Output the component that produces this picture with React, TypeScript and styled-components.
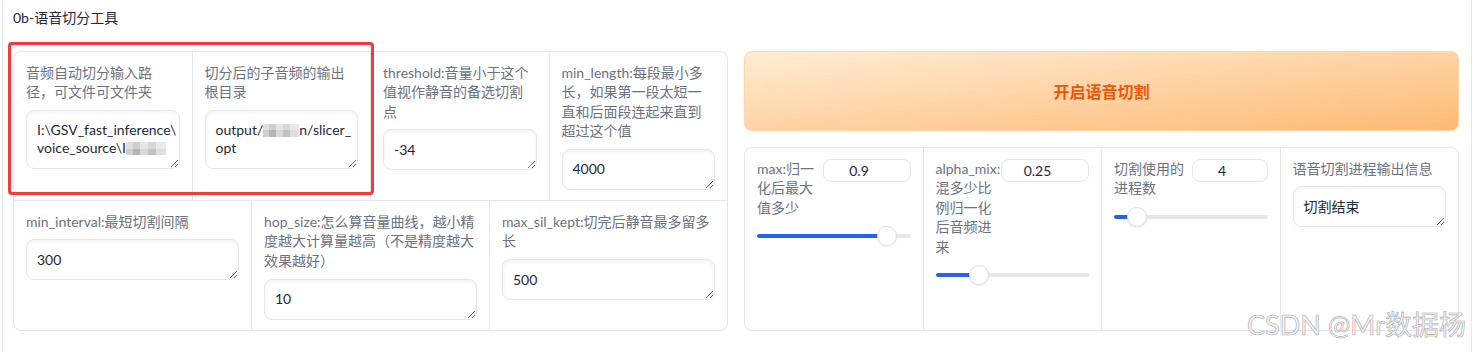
import styled, { createGlobalStyle } from "styled-components";

const GlobalStyle = createGlobalStyle`
  html, body {
    margin: 0;
    padding: 0;
    background: #ffffff;
  }
  body {
    font-family: Lato, "Noto Sans CJK SC", sans-serif;
    color: #1f2937;
    overflow: hidden;
  }
  * {
    box-sizing: border-box;
  }
`;

const Frame = styled.div`
  position: relative;
  margin-left: 2px;
  width: 1470px;
  height: 352px;
  border-left: 1px solid #e5e7eb;
  border-right: 1px solid #e5e7eb;
  padding: 8px 12px 0 10px;
`;

const Title = styled.div`
  font-size: 14px;
  line-height: 20px;
  color: #1f2937;
  margin-bottom: 23px;
`;

const Layout = styled.div`
  display: grid;
  grid-template-columns: 1fr 1fr;
  gap: 16px;
`;

const Form = styled.div`
  display: flex;
  flex-direction: column;
  gap: 1px;
  background: #e5e7eb;
  border: 1px solid #e5e7eb;
  border-radius: 8px;
  overflow: hidden;
`;

const FormRow = styled.div<{ $cols: number }>`
  display: grid;
  grid-template-columns: repeat(${(p) => p.$cols}, 1fr);
  gap: 1px;
  flex: 1;
`;

const Cell = styled.div`
  background: #ffffff;
  padding: 10.5px 12px;
  min-width: 0;
`;

const Label = styled.span`
  display: block;
  font-size: 14px;
  line-height: 19.6px;
  color: #6b7280;
  margin-bottom: 8px;
`;

const TextBox = styled.div`
  background: #ffffff;
  border: 1px solid #e5e7eb;
  border-radius: 8px;
  padding: 10.5px 7px 10.5px 10px;
  font-size: 14px;
  line-height: 18px;
  color: #1f2937;
  box-shadow: inset 0 2px 4px rgba(0, 0, 0, 0.05);
  white-space: nowrap;
  overflow: hidden;
  resize: vertical;
`;

const Line = styled.span`
  display: block;
`;

const Mosaic = styled.span<{ $w: number }>`
  display: inline-block;
  width: ${(p) => p.$w}px;
  height: 13px;
  vertical-align: -2px;
  background:
    linear-gradient(180deg, rgba(255, 255, 255, 0.35) 0 50%, rgba(0, 0, 0, 0) 50%),
    linear-gradient(90deg, #cfcfcf 0 18%, #b8b4b4 18% 36%, #d9d9d9 36% 55%, #c2c2c2 55% 75%, #dedede 75%);
`;

const RightColumn = styled.div`
  display: flex;
  flex-direction: column;
  gap: 16px;
`;

const StartButton = styled.button`
  height: 80px;
  border: 1px solid #fed7aa;
  border-radius: 8px;
  background: linear-gradient(to bottom right, #ffedd5, #fdba74);
  box-shadow: 0 1px 2px rgba(0, 0, 0, 0.05);
  color: #ea580c;
  font-family: Lato, "Noto Sans CJK SC", sans-serif;
  font-size: 16px;
  font-weight: 700;
  cursor: pointer;
`;

const SliderForm = styled(Form)`
  flex: 1;
`;

const SliderHead = styled.div`
  display: flex;
  align-items: flex-start;
`;

const HeadLabel = styled.span`
  flex: 1;
  min-width: 0;
  font-size: 14px;
  line-height: 19.6px;
  color: #6b7280;
`;

const NumBox = styled.div<{ $w: number }>`
  flex: none;
  width: ${(p) => p.$w}px;
  height: 23.5px;
  border: 1px solid #e5e7eb;
  border-radius: 8px;
  padding-right: 15px;
  text-align: center;
  font-size: 14px;
  line-height: 21.5px;
  color: #1f2937;
`;

const Range = styled.input.attrs({ type: "range" })<{ $f: number }>`
  -webkit-appearance: none;
  appearance: none;
  display: block;
  width: 100%;
  height: 20px;
  margin: 9px 0 0;
  padding: 0;
  background: transparent;

  &::-webkit-slider-runnable-track {
    height: 4px;
    border-radius: 2px;
    background: linear-gradient(
      to right,
      #2563eb 0,
      #2563eb calc(10px + ${(p) => p.$f} * (100% - 20px)),
      #e5e7eb calc(10px + ${(p) => p.$f} * (100% - 20px)),
      #e5e7eb 100%
    );
  }

  &::-webkit-slider-thumb {
    -webkit-appearance: none;
    width: 20px;
    height: 20px;
    margin-top: -8px;
    border-radius: 50%;
    background: #ffffff;
    border: 1px solid #dcdfe4;
    box-shadow: 0 1px 2px rgba(0, 0, 0, 0.08);
  }
`;

const Annotation = styled.div`
  position: absolute;
  left: 5px;
  top: 42px;
  width: 366px;
  height: 153px;
  border: 3px solid #f23b3b;
  border-radius: 4px;
  pointer-events: none;
`;

const Watermark = styled.div`
  position: absolute;
  left: 1244px;
  top: 310px;
  font-family: Lato, "Noto Sans CJK SC", sans-serif;
  font-size: 27px;
  line-height: 30px;
  white-space: nowrap;
  color: rgba(244, 244, 244, 0.9);
  -webkit-text-stroke: 0.6px #ababab;
  pointer-events: none;
`;

type SliderProps = {
  label: string;
  value: number;
  min: number;
  max: number;
  step: number;
  inputWidth: number;
};

function SliderCell({ label, value, min, max, step, inputWidth }: SliderProps) {
  const f = (value - min) / (max - min);
  return (
    <Cell>
      <SliderHead>
        <HeadLabel>{label}</HeadLabel>
        <NumBox $w={inputWidth}>{value}</NumBox>
      </SliderHead>
      <Range $f={f} min={min} max={max} step={step} defaultValue={value} />
    </Cell>
  );
}

export default function App() {
  return (
    <>
      <GlobalStyle />
      <Frame>
        <Title>0b-语音切分工具</Title>
        <Layout>
          <Form>
            <FormRow $cols={4}>
              <Cell>
                <Label>音频自动切分输入路径，可文件可文件夹</Label>
                <TextBox>
                  <Line>I:\GSV_fast_inference\</Line>
                  <Line>
                    voice_source\I<Mosaic $w={40} />
                  </Line>
                </TextBox>
              </Cell>
              <Cell>
                <Label>切分后的子音频的输出根目录</Label>
                <TextBox>
                  <Line>
                    output/<Mosaic $w={36} />
                    n/slicer_
                  </Line>
                  <Line>opt</Line>
                </TextBox>
              </Cell>
              <Cell>
                <Label>threshold:音量小于这个值视作静音的备选切割点</Label>
                <TextBox>-34</TextBox>
              </Cell>
              <Cell>
                <Label>min_length:每段最小多长，如果第一段太短一直和后面段连起来直到超过这个值</Label>
                <TextBox>4000</TextBox>
              </Cell>
            </FormRow>
            <FormRow $cols={3}>
              <Cell>
                <Label>min_interval:最短切割间隔</Label>
                <TextBox>300</TextBox>
              </Cell>
              <Cell>
                <Label>hop_size:怎么算音量曲线，越小精度越大计算量越高（不是精度越大效果越好）</Label>
                <TextBox>10</TextBox>
              </Cell>
              <Cell>
                <Label>max_sil_kept:切完后静音最多留多长</Label>
                <TextBox>500</TextBox>
              </Cell>
            </FormRow>
          </Form>

          <RightColumn>
            <StartButton>开启语音切割</StartButton>
            <SliderForm>
              <FormRow $cols={4}>
                <SliderCell label="max:归一化后最大值多少" value={0.9} min={0} max={1} step={0.05} inputWidth={88} />
                <SliderCell label="alpha_mix:混多少比例归一化后音频进来" value={0.25} min={0} max={1} step={0.05} inputWidth={88} />
                <SliderCell label="切割使用的进程数" value={4} min={1} max={32} step={1} inputWidth={76} />
                <Cell>
                  <Label>语音切割进程输出信息</Label>
                  <TextBox>切割结束</TextBox>
                </Cell>
              </FormRow>
            </SliderForm>
          </RightColumn>
        </Layout>
        <Annotation />
        <Watermark>CSDN @Mr数据杨</Watermark>
      </Frame>
    </>
  );
}
